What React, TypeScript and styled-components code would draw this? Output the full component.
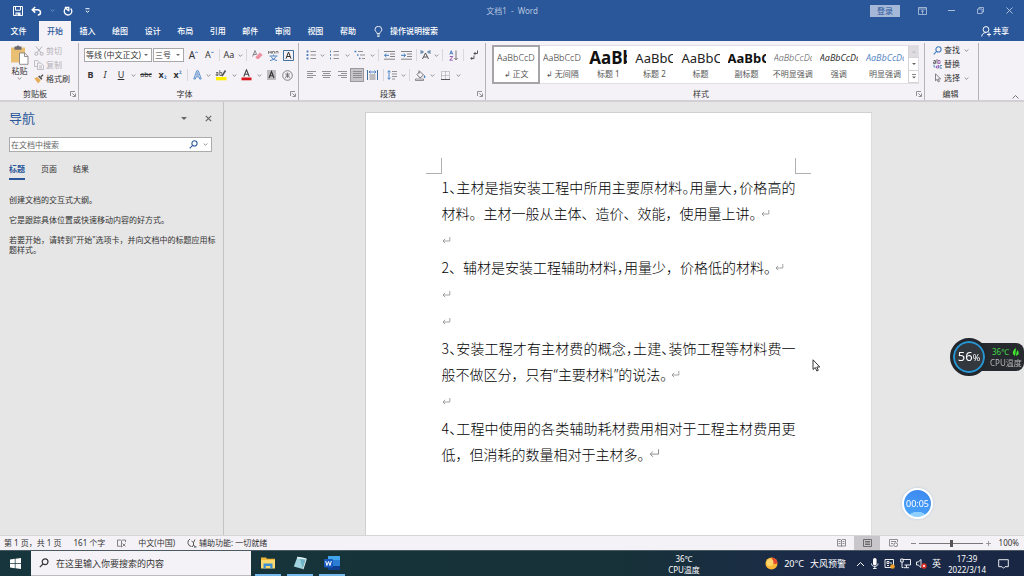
import React from 'react';
import styled, { createGlobalStyle, css } from 'styled-components';

const blue = '#2a579a';
const ui = '"Noto Sans", "Noto Sans CJK SC", sans-serif';

const GlobalStyle = createGlobalStyle`
  * { box-sizing: border-box; }
  body { margin: 0; background: #e6e6e6; font: 8px/12px ${ui}; color: #333; overflow: hidden; }
  button, input, select { font: inherit; color: inherit; }
  button { border: 0; padding: 0; background: none; }
  svg { display: block; flex: none; }
  p, h1, h2, ul { margin: 0; padding: 0; }
`;

const Shell = styled.div`
  display: flex;
  flex-direction: column;
  height: 100vh;
  min-height: 320px;
`;

/* Title bar */
const TitleBar = styled.header`
  display: grid;
  grid-template-columns: 1fr auto 1fr;
  align-items: center;
  height: 21px;
  background: ${blue};
  color: #fff;
`;
const QuickAccess = styled.div`
  display: flex;
  align-items: center;
  gap: 8px;
  padding-left: 13px;
`;
const WindowTitle = styled.h1`
  font-size: 8px;
  font-weight: 400;
  line-height: 12px;
  color: #b4c4de;
  white-space: pre;
`;
const WindowButtons = styled.div`
  display: flex;
  justify-content: flex-end;
  align-items: center;
  color: #b9c8e0;
`;
const SignIn = styled.button`
  width: 30px;
  height: 12px;
  margin-right: 8px;
  background: #a5b8d7;
  color: ${blue};
`;
const WindowButton = styled.button`
  display: flex;
  justify-content: center;
  width: 29px;
`;
const IconButton = styled.button`
  display: flex;
  align-items: center;
  justify-content: center;
`;

/* Ribbon tabs */
const TabBar = styled.nav`
  display: flex;
  align-items: stretch;
  height: 20px;
  background: ${blue};
  color: #fff;
  font-weight: 500;
`;
const FileTab = styled.button`
  width: 39px;
  padding-right: 2px;
`;
const TabList = styled.div`
  display: flex;
  justify-content: space-between;
  width: 325px;
`;
const Tab = styled.button<{ $active?: boolean }>`
  width: 32px;
  ${p => p.$active && css`background: #f5f2f7; color: ${blue};`}
`;
const TellMe = styled.button`
  display: flex;
  align-items: center;
  gap: 7px;
  margin-left: 10px;
`;
const Share = styled(TellMe)`
  gap: 2px;
  margin: 0 15px 0 auto;
`;

/* Ribbon */
const Ribbon = styled.section`
  display: flex;
  height: 61px;
  padding: 2px 0 0;
  background: #f5f2f7;
  border-bottom: 2px solid #d2d0d4;
`;
const Group = styled.div<{ $w?: number }>`
  display: flex;
  flex-direction: column;
  justify-content: space-between;
  ${p => (p.$w ? css`width: ${p.$w}px;` : css`flex: 1; min-width: 0;`)}
  border-right: 1px solid #b5b3b8;
`;
const GroupFooter = styled.div`
  display: flex;
  align-items: center;
  height: 12px;
  padding-right: 2px;
`;
const GroupName = styled.span`
  flex: 1;
  text-align: center;
`;
const Rows = styled.div`
  display: flex;
  flex-direction: column;
  gap: 6px;
  padding: 5px 0 0 5px;
`;
const Row = styled.div`
  display: flex;
  height: 14px;
`;
const Tool = styled.button<{ $w: number; $on?: boolean }>`
  display: flex;
  align-items: center;
  justify-content: center;
  width: ${p => p.$w}px;
  height: 14px;
  ${p => p.$on && css`background: #c6c4c8; outline: 1px solid #9b999d; outline-offset: -1px;`}
`;
const Divider = styled.i`
  width: 5px;
  height: 14px;
  background: linear-gradient(#d9d7db, #d9d7db) center / 1px 12px no-repeat;
`;
const Combo = styled.span<{ $w: number }>`
  display: flex;
  align-items: center;
  width: ${p => p.$w}px;
  height: 14px;
  margin-right: 1px;
  padding-right: 3px;
  background: #fff;
  border: 1px solid #a9a8ab;
`;
const ComboSelect = styled.select`
  flex: 1;
  min-width: 0;
  height: 12px;
  padding: 0 0 0 1px;
  border: 0;
  appearance: none;
  background: none;
  line-height: 12px;
`;
const Letter = styled.span<{ $bold?: boolean; $italic?: boolean; $line?: string; $size?: number }>`
  font-size: ${p => p.$size ?? 9}px;
  font-weight: ${p => (p.$bold ? 700 : 400)};
  font-style: ${p => (p.$italic ? 'italic' : 'normal')};
  text-decoration: ${p => p.$line ?? 'none'};
  line-height: 12px;
`;

const Clipboard = styled.div`
  display: flex;
  gap: 5px;
  padding: 2px 0 0 10px;
`;
const PasteButton = styled.button`
  display: flex;
  flex-direction: column;
  align-items: center;
  width: 19px;
  height: 38px;
`;
const Stack = styled.div`
  display: flex;
  flex-direction: column;
  gap: 2px;
`;
const SmallCommand = styled.button<{ $off?: boolean }>`
  display: flex;
  align-items: center;
  gap: 2px;
  height: 12px;
  color: ${p => (p.$off ? '#b3b1b5' : '#333')};
`;
const Editing = styled(Stack)`
  padding: 1px 0 0 8px;
`;

const Gallery = styled.div`
  display: flex;
  height: 39px;
  margin: 2px 5px 0 6px;
  background: #fff;
  border: 1px solid #e1dfe3;
`;
const StyleList = styled.div`
  display: grid;
  grid-template-columns: repeat(9, 1fr);
  flex: 1;
`;
const StyleTile = styled.button<{ $on?: boolean }>`
  display: flex;
  flex-direction: column;
  align-items: center;
  min-width: 0;
  padding: 0 4px;
  ${p => p.$on && css`outline: 2px solid #a6a4a8; outline-offset: -1px;`}
`;
const Sample = styled.span<{ $size: number; $weight: number; $italic?: boolean; $color: string }>`
  width: 100%;
  height: 22px;
  overflow: hidden;
  text-align: left;
  line-height: 24px;
  font-size: ${p => p.$size}px;
  font-weight: ${p => p.$weight};
  font-style: ${p => (p.$italic ? 'italic' : 'normal')};
  color: ${p => p.$color};
`;
const StyleName = styled.span`
  color: #555;
  white-space: nowrap;
`;
const GalleryScroll = styled.div`
  display: grid;
  grid-template-rows: repeat(3, 1fr);
  width: 10px;
  border-left: 1px solid #d5d3d7;
`;
const ScrollButton = styled(IconButton)<{ $off?: boolean }>`
  border-bottom: 1px solid #d5d3d7;
  background: ${p => (p.$off ? '#dddbdf' : '#fff')};
`;
const RibbonTail = styled.div`
  display: flex;
  align-items: flex-end;
  justify-content: flex-end;
  width: 45px;
  padding: 0 5px 1px 0;
`;

/* Work area */
const Workspace = styled.main`
  display: flex;
  flex: 1;
  min-height: 0;
`;
const NavPane = styled.aside`
  width: 224px;
  padding: 7px 11px 0 9px;
  border-right: 1px solid #c4c4c4;
`;
const PaneHeader = styled.div`
  display: flex;
  align-items: center;
  gap: 18px;
  height: 18px;
  color: #666;
`;
const PaneTitle = styled.h2`
  flex: 1;
  font-size: 13px;
  line-height: 18px;
  font-weight: 400;
  color: ${blue};
`;
const SearchBox = styled.div`
  display: flex;
  align-items: center;
  gap: 5px;
  height: 15px;
  margin-top: 10px;
  padding-right: 3px;
  background: #fff;
  border: 1px solid #ababab;
`;
const SearchField = styled.input`
  flex: 1;
  min-width: 0;
  height: 12px;
  padding: 0 1px;
  border: 0;
  background: none;
  outline: 0;
  &::placeholder { color: #666; opacity: 1; }
`;
const PaneTabs = styled.div`
  display: flex;
  gap: 16px;
  margin-top: 10px;
`;
const PaneTab = styled.button<{ $active?: boolean }>`
  height: 18px;
  padding-bottom: 4px;
  ${p => p.$active && css`color: ${blue}; font-weight: 700; border-bottom: 2px solid ${blue}; padding-bottom: 2px;`}
`;
const Hints = styled.div`
  display: flex;
  flex-direction: column;
  gap: 10px;
  margin: 15px -8px 0 0;
  line-height: 10px;
`;

const Canvas = styled.div`
  display: flex;
  justify-content: center;
  flex: 1;
  min-width: 0;
  padding: 10px 12px 0 0;
  overflow: hidden;
`;
const Paper = styled.article`
  position: relative;
  width: 507px;
  padding: 61px 75px 0 76px;
  background: #fff;
  border: 1px solid #d0d0d0;
  border-bottom: 0;
  border-right-color: #dcdcdc;
  color: #000;
  font: 300 14px/26px "Noto Sans CJK SC", sans-serif;
`;
const Corner = styled.i<{ $side: 'left' | 'right' }>`
  position: absolute;
  top: 45px;
  width: 16px;
  height: 16px;
  border-bottom: 1px solid #b0b0b0;
  ${p => (p.$side === 'left'
    ? css`left: 60px; border-right: 1px solid #b0b0b0;`
    : css`right: 60px; border-left: 1px solid #b0b0b0;`)}
`;
const Paragraph = styled.p`
  margin-bottom: 1px;
  text-align: justify;
`;
const Half = styled.span`
  font-feature-settings: "halt";
`;
const Quote = styled.span`
  font-family: "Noto Sans", sans-serif;
  line-height: 20px;
`;
const Mark = styled.svg`
  display: inline-block;
  margin-left: 4px;
  vertical-align: 1px;
`;
const EmptyMark = styled(Mark)`
  margin-left: 0;
`;

/* Overlays */
const CpuMeter = styled.div`
  position: fixed;
  right: 0;
  top: 338px;
  display: flex;
  align-items: center;
`;
const CpuDial = styled.div`
  display: flex;
  align-items: baseline;
  justify-content: center;
  width: 38px;
  height: 38px;
  margin-right: -8px;
  border-radius: 50%;
  border: 3px solid #23272c;
  background: #33373e;
  box-shadow: inset 0 0 0 2px #2597d6;
  color: #fff;
  font-size: 13px;
  line-height: 30px;
  z-index: 1;
`;
const Percent = styled.span`
  font-size: 9px;
`;
const CpuInfo = styled.div`
  width: 44px;
  height: 28px;
  padding: 3px 0 0 10px;
  border-radius: 0 8px 8px 0;
  background: #26292d;
  color: #b5b7ba;
  line-height: 11px;
  white-space: nowrap;
`;
const CpuTemp = styled.div`
  display: flex;
  align-items: center;
  gap: 3px;
  padding-left: 2px;
  color: #41d84a;
`;
const Timer = styled.div`
  position: fixed;
  right: 91px;
  bottom: 57px;
  width: 31px;
  height: 31px;
  border-radius: 50%;
  border: 2px solid #fff;
  background: radial-gradient(circle at 50% 130%, #8fd0ff 0 35%, transparent 36%), linear-gradient(200deg, #3b86ee, #4aa6fb);
  box-shadow: 0 0 3px #b9cbe0;
  color: #fff;
  font-size: 9px;
  line-height: 27px;
  text-align: center;
`;
const Pointer = styled.svg`
  position: fixed;
  left: 812px;
  top: 359px;
`;

/* Status bar */
const StatusBar = styled.footer`
  display: flex;
  align-items: center;
  height: 15px;
  padding: 0 5px 0 4px;
  background: #f5f2f7;
  border-top: 1px solid #d6d4d8;
`;
const StatusLeft = styled.div`
  display: flex;
  align-items: center;
  gap: 12px;
  flex: 1;
`;
const StatusItem = styled.span`
  display: flex;
  align-items: center;
  gap: 2px;
  white-space: nowrap;
`;
const ViewButton = styled.button<{ $on?: boolean }>`
  display: flex;
  align-items: center;
  justify-content: center;
  width: 26px;
  height: 14px;
  background: ${p => (p.$on ? '#c8c6ca' : 'none')};
`;
const Zoom = styled.div`
  display: flex;
  align-items: center;
  gap: 3px;
  margin-left: 5px;
`;
const ZoomSlider = styled.input`
  width: 64px;
  height: 10px;
  margin: 0;
  appearance: none;
  background: linear-gradient(#777, #777) center / 100% 1px no-repeat;
  &::-webkit-slider-thumb {
    appearance: none;
    width: 3px;
    height: 7px;
    background: #555;
  }
`;
const ZoomValue = styled.output`
  width: 25px;
  text-align: right;
`;

/* Taskbar */
const Taskbar = styled.footer`
  display: flex;
  align-items: center;
  height: 26px;
  border-top: 1px solid #4a5a62;
  background: linear-gradient(90deg, #16353d, #173238 60%, #1b2a49 80%, #192744);
  color: #fff;
`;
const StartButton = styled(IconButton)`
  width: 31px;
  height: 25px;
`;
const TaskSearch = styled.div`
  display: flex;
  align-items: center;
  gap: 6px;
  width: 220px;
  height: 25px;
  padding-left: 8px;
  background: #f5f2f7;
  border-bottom: 1px solid #bbb;
  color: #333;
  font-size: 9px;
`;
const TaskField = styled(SearchField)`
  height: 16px;
  &::placeholder { color: #333; }
`;
const TaskApps = styled.div`
  display: flex;
  flex: 1;
  gap: 6px;
  padding-left: 4px;
`;
const TaskApp = styled(IconButton)`
  width: 26px;
  height: 25px;
  border-bottom: 2px solid #76b9ed;
`;
const TwoLine = styled.div`
  display: flex;
  flex-direction: column;
  align-items: center;
  width: 42px;
  line-height: 11px;
`;
const Tray = styled.div`
  display: flex;
  align-items: center;
  justify-content: flex-end;
  gap: 5px;
  width: 319px;
  padding-right: 15px;
  font-size: 9px;
`;
const Weather = styled.span`
  display: flex;
  align-items: center;
  gap: 6px;
  margin-right: 5px;
  white-space: nowrap;
`;
const Clock = styled(TwoLine)`
  margin-right: 5px;
  font-size: 8px;
`;

type GlyphProps = { w: number; h: number; children: React.ReactNode; stroke?: string };
const Glyph = ({ w, h, children, stroke = 'currentColor' }: GlyphProps) => (
  <svg width={w} height={h} viewBox={`0 0 ${w} ${h}`} fill="none" stroke={stroke} aria-hidden="true">{children}</svg>
);

const Chevron = ({ color = '#777' }: { color?: string }) => (
  <Glyph w={5} h={3} stroke={color}><path d="M.7.5 2.5 2.3 4.3.5" strokeWidth=".8" /></Glyph>
);
const Triangle = ({ s = 4 }: { s?: number }) => (
  <svg width={s} height={s / 2} viewBox="0 0 4 2" aria-hidden="true"><path d="M0 0h4L2 2z" fill="#666" /></svg>
);
const Launcher = () => (
  <IconButton aria-label="更多选项">
    <Glyph w={6} h={6} stroke="#777"><path d="M.5 5V.5H5M2.3 2.3 5 5M5.5 2.5v3h-3" strokeWidth=".8" /></Glyph>
  </IconButton>
);
const Magnifier = ({ s = 10, color = '#41719c' }: { s?: number; color?: string }) => (
  <svg width={s} height={s} viewBox="0 0 10 10" fill="none" stroke={color} strokeWidth="1.2" aria-hidden="true">
    <circle cx="6.1" cy="3.8" r="2.9" /><path d="M4 6 .8 9.2" />
  </svg>
);
const Lines = ({ rows }: { rows: [number, number][] }) => (
  <Glyph w={11} h={10} stroke="#8a888c">
    {rows.map(([a, b], i) => <path key={i} d={`M${a} ${i * 2 + 1.5}H${b}`} strokeWidth=".9" />)}
  </Glyph>
);
const Drop = ({ label }: { label: string }) => <Tool $w={8} aria-label={label}><Chevron /></Tool>;
const Return = ({ big, empty }: { big?: boolean; empty?: boolean }) => {
  const El = empty ? EmptyMark : Mark;
  return (
    <El width={big ? 11 : 9} height={big ? 11 : 9} viewBox="0 0 9 9" fill="none" stroke="#8c8c8c" strokeWidth=".8" aria-hidden="true">
      <path d="M7.8 1v4H1M3.2 2.8 1 5l2.2 2.2" />
    </El>
  );
};

const ListIcon = ({ kind }: { kind: 'dot' | 'num' | 'multi' }) => (
  <Glyph w={11} h={10} stroke="#777">
    {kind === 'multi' ? (
      <><path d="M4 1.5h5M6 5h5M8 8.5h3" strokeWidth=".8" /><path d="M.5 1.5h1.8M3 5h1.5M5 8.5h1.5" stroke="#4a7ebb" strokeWidth="1.6" /></>
    ) : (
      <>
        <path d="M4.5 1.5H10M4.5 5H10M4.5 8.5H10" strokeWidth=".8" />
        <path d="M1.5.6v1.8M1.5 4.1v1.8M1.5 7.6v1.8" stroke="#4a7ebb" strokeWidth={kind === 'dot' ? 1.8 : 1} />
      </>
    )}
  </Glyph>
);
const IndentIcon = ({ inward }: { inward?: boolean }) => (
  <Glyph w={11} h={9} stroke="#777">
    <path d="M0 .5h11M6 3h5M6 5.5h5M0 8.2h11" strokeWidth=".9" />
    <path d={inward ? 'M0 4.3h4.4M2.8 2.6l1.8 1.7L2.8 6' : 'M5 4.3H.7M2.3 2.6.5 4.3 2.3 6'} stroke="#3b78bd" />
  </Glyph>
);

const tabs = ['开始', '插入', '绘图', '设计', '布局', '引用', '邮件', '审阅', '视图', '帮助'];

const styles = [
  { name: '↲ 正文', size: 9, weight: 300, color: '#333' },
  { name: '↲ 无间隔', size: 9, weight: 300, color: '#333' },
  { name: '标题 1', size: 17, weight: 700, color: '#111' },
  { name: '标题 2', size: 13, weight: 400, color: '#222' },
  { name: '标题', size: 13, weight: 400, color: '#222' },
  { name: '副标题', size: 13, weight: 700, color: '#111' },
  { name: '不明显强调', size: 9, weight: 300, color: '#555', italic: true },
  { name: '强调', size: 9, weight: 400, color: '#333', italic: true },
  { name: '明显强调', size: 9, weight: 400, color: '#5b8ac6', italic: true },
];

const TopBars = () => (
  <>
    <TitleBar>
      <QuickAccess>
        <IconButton aria-label="保存">
          <Glyph w={10} h={10}><path d="M.5.5h9v9h-9zM2.500.8v3.400h5V.8" /><path d="M2.500 6.500h5v3h-5z" fill="#fff" stroke="none" /><path d="M4 7.500v2" stroke={blue} /></Glyph>
        </IconButton>
        <IconButton aria-label="撤消">
          <Glyph w={11} h={10}><path d="M4.2 1 1.3 3.8l2.9 2.8M1.5 3.8h4.7c4.6.3 4 5.2.6 5.3" strokeWidth="1.5" /></Glyph>
        </IconButton>
        <Chevron color="#7f9cc9" />
        <IconButton aria-label="重复">
          <Glyph w={10} h={10}><path d="M7.600 2.400A3.800 3.800 0 1 1 2.600 2.300L5.300 4.500M1.800 1.500h4v3.700" strokeWidth="1.300" /></Glyph>
        </IconButton>
        <IconButton aria-label="自定义快速访问工具栏">
          <Glyph w={12} h={5}><path d="M4.500.7h4M4.800 2.800l1.700 1.400 1.700-1.400" /></Glyph>
        </IconButton>
      </QuickAccess>
      <WindowTitle>文档1  -  Word</WindowTitle>
      <WindowButtons>
        <SignIn>登录</SignIn>
        <WindowButton aria-label="功能区显示选项">
          <Glyph w={9} h={8}><path d="M.5.5h8v7h-8zM.5 2h8M4.5 6.8V3.4M3 4.7l1.5-1.4L6 4.7" strokeWidth=".8" /></Glyph>
        </WindowButton>
        <WindowButton aria-label="最小化"><Glyph w={7} h={7}><path d="M0 3.5h7" strokeWidth=".9" /></Glyph></WindowButton>
        <WindowButton aria-label="向下还原">
          <Glyph w={7} h={7}><path d="M.5 2h4.6v4.5H.5zM2 2V.5h4.5V5H5" strokeWidth=".8" /></Glyph>
        </WindowButton>
        <WindowButton aria-label="关闭"><Glyph w={7} h={7}><path d="m.5.5 6 6m0-6-6 6" strokeWidth=".9" /></Glyph></WindowButton>
      </WindowButtons>
    </TitleBar>
    <TabBar>
      <FileTab>文件</FileTab>
      <TabList>{tabs.map((t, i) => <Tab key={t} $active={i === 0}>{t}</Tab>)}</TabList>
      <TellMe>
        <Glyph w={9} h={11}><path d="M3 7.5C3 6 1 5.500 1 3.700a3.400 3.400 0 0 1 6.800 0C7.800 5.500 5.800 6 5.800 7.500zM3 9h2.800M3.300 10.400h2.200" strokeWidth=".9" /></Glyph>
        操作说明搜索
      </TellMe>
      <Share>
        <Glyph w={10} h={11}><circle cx="5" cy="3.500" r="2.900" /><path d="M.7 10.500C1 7.800 2.800 6.600 4.800 6.600M8 6.500v4M6 8.500h4" /></Glyph>
        共享
      </Share>
    </TabBar>
  </>
);

const ClipboardGroup = () => (
  <Group $w={79}>
    <Clipboard>
      <PasteButton>
        <Glyph w={19} h={20} stroke="none">
          <path d="M1 2.500h14v15H1z" fill="#e9bf74" /><path d="M4.500 1.500h2a1.600 1.600 0 0 1 3 0h2v3.200h-7z" fill="#6b6870" />
          <path d="M9.500 8h5.200l3.300 3.300v8H9.500z" fill="#fff" stroke="#777" strokeWidth=".8" /><path d="M14.500 8v3.500H18" stroke="#777" strokeWidth=".8" />
        </Glyph>
        粘贴
        <Chevron />
      </PasteButton>
      <Stack>
        <SmallCommand $off>
          <Glyph w={10} h={10}><path d="m2 .5 4.800 6M8 .5l-4.800 6" /><circle cx="2.300" cy="7.800" r="1.500" /><circle cx="7.600" cy="7.800" r="1.500" /></Glyph>剪切
        </SmallCommand>
        <SmallCommand $off>
          <Glyph w={10} h={10}><path d="M3.500 6.500h-3v-6h3l2 2M3.500 3h3.300L9.500 5.500v4h-6zM5 6h3M5 7.800h3" strokeWidth=".8" /></Glyph>复制
        </SmallCommand>
        <SmallCommand>
          <Glyph w={10} h={10} stroke="none"><path d="m.3 4.200 3-1.200 3.400 3.300-2.500 3.300z" fill="#e5ad57" /><path d="m4 2.600 1.500-1 2.900 2.900-1 1.500z" fill="#555" /><path d="m7 2.800 2-2" stroke="#555" strokeWidth="1.600" /></Glyph>格式刷
        </SmallCommand>
      </Stack>
    </Clipboard>
    <GroupFooter><GroupName>剪贴板</GroupName><Launcher /></GroupFooter>
  </Group>
);

const FontGroup = () => (
  <Group $w={220}>
    <Rows>
      <Row>
        <Combo $w={68}><ComboSelect aria-label="字体"><option>等线 (中文正文)</option></ComboSelect><Triangle /></Combo>
        <Combo $w={31}><ComboSelect aria-label="字号"><option>三号</option></ComboSelect><Triangle /></Combo>
        <Tool $w={17} aria-label="增大字号"><Letter $size={10}>A</Letter><Glyph w={3} h={8} stroke="#3b78bd"><path d="m.3 2 1.200-1.200L2.700 2" /></Glyph></Tool>
        <Tool $w={15} aria-label="减小字号"><Letter $size={9}>A</Letter><Glyph w={3} h={8} stroke="#3b78bd"><path d="m.3.800 1.200 1.200L2.700.800" /></Glyph></Tool>
        <Divider />
        <Tool $w={14} aria-label="更改大小写"><Letter>Aa</Letter></Tool><Drop label="大小写选项" />
        <Divider />
        <Tool $w={16} aria-label="清除所有格式">
          <Glyph w={11} h={11} stroke="none"><path d="m4 6.500 4-4 2.600 2.600-4 4H5L3.500 7.500z" fill="#ee8fa2" /><path d="M.6 6.500 3 .6l1.700 4M1.400 4.500h2.800" stroke="#666" strokeWidth=".8" /></Glyph>
        </Tool>
        <Tool $w={16} aria-label="拼音指南">
          <Glyph w={11} h={11}><path d="M.5 1v2.500L2 1.500l1.300 2V1M4.500 3.500v-2H6.500v2M8 3.500v-2h2v2" stroke="#666" strokeWidth=".8" /><path d="M5.500 4.500v1.300M1.500 6h8M3 6.500c1 2 3 3.500 6 4M8 6.500c-1 2-3 3.500-6 4" stroke="#3b78bd" strokeWidth=".9" /></Glyph>
        </Tool>
        <Tool $w={15} aria-label="字符边框">
          <Glyph w={11} h={11}><path d="M.5.5h10v10H.5z" stroke="#41719c" /><path d="M3 8.700 5.500 2 8 8.700M3.900 6.500h3.200" stroke="#333" /></Glyph>
        </Tool>
      </Row>
      <Row>
        <Tool $w={13} aria-label="加粗"><Letter $bold>B</Letter></Tool>
        <Tool $w={16} aria-label="倾斜"><Letter $italic>I</Letter></Tool>
        <Tool $w={16} aria-label="下划线"><Letter $line="underline">U</Letter></Tool><Drop label="下划线样式" />
        <Tool $w={18} aria-label="删除线"><Letter $line="line-through" $size={7}>abc</Letter></Tool>
        <Tool $w={15} aria-label="下标"><Letter $bold>x</Letter><Glyph w={3} h={8} stroke="#3b78bd"><path d="M.3 5h1.700v1.200L.5 7.500H2.700" strokeWidth=".7" /></Glyph></Tool>
        <Tool $w={15} aria-label="上标"><Letter $bold>x</Letter><Glyph w={3} h={10} stroke="#3b78bd"><path d="M.3 1h1.700v1.200L.5 3.500H2.700" strokeWidth=".7" /></Glyph></Tool>
        <Divider />
        <Tool $w={14} aria-label="文本效果">
          <Glyph w={9} h={10} stroke="#4a86c8"><path d="M.8 9 3.700.800h1.600L8.200 9H6.700L6 6.800H3L2.300 9z" strokeWidth=".9" /><path d="m3.500 5.300 1-2.800 1 2.800z" strokeWidth=".7" /></Glyph>
        </Tool>
        <Drop label="文本效果选项" />
        <Tool $w={18} aria-label="突出显示">
          <Glyph w={12} h={12} stroke="#555"><path d="M1 8h10.500v3.300H1z" fill="#fff000" stroke="none" /><path d="M1 3.500h2v3H1.200V5H3M4.800 1v5.500h2v-3h-2" strokeWidth=".8" /><path d="m7 7 3.500-5.500" strokeWidth="1.600" /></Glyph>
        </Tool>
        <Drop label="突出显示颜色" />
        <Tool $w={17} aria-label="字体颜色">
          <Glyph w={11} h={12} stroke="#444"><path d="M2.800 7.500 5.500.800l2.700 6.700M3.700 5.300h3.600" strokeWidth="1.100" /><path d="M.5 8.500h10v2.800H.5z" fill="#d8141c" stroke="none" /></Glyph>
        </Tool>
        <Drop label="字体颜色选项" />
        <Tool $w={17} aria-label="字符底纹">
          <Glyph w={9} h={10} stroke="#333"><path d="M0 0h9v10H0z" fill="#bdbbbf" stroke="none" /><path d="m2 8 2.500-6.500L7 8M2.900 5.800h3.200" strokeWidth="1.100" /></Glyph>
        </Tool>
        <Tool $w={15} aria-label="带圈字符">
          <Glyph w={11} h={11} stroke="#666"><circle cx="5.500" cy="5.500" r="4.800" strokeWidth=".8" /><path d="M3 4h5M5.500 2.500V8M3 8c1.500-.5 2-2 2.300-4M8 8C6.500 7.500 6 6 5.700 4M3.500 6h4" strokeWidth=".7" /></Glyph>
        </Tool>
      </Row>
    </Rows>
    <GroupFooter><GroupName>字体</GroupName><Launcher /></GroupFooter>
  </Group>
);

const ParagraphGroup = () => (
  <Group $w={187}>
    <Rows>
      <Row>
        <Tool $w={14} aria-label="项目符号"><ListIcon kind="dot" /></Tool><Drop label="项目符号库" />
        <Tool $w={17} aria-label="编号"><ListIcon kind="num" /></Tool><Drop label="编号库" />
        <Tool $w={17} aria-label="多级列表"><ListIcon kind="multi" /></Tool><Drop label="列表库" />
        <Divider />
        <Tool $w={17} aria-label="减少缩进量"><IndentIcon /></Tool>
        <Tool $w={16} aria-label="增加缩进量"><IndentIcon inward /></Tool>
        <Divider />
        <Tool $w={13} aria-label="中文版式">
          <Glyph w={11} h={10} stroke="#555"><path d="M2.500 9 5.500 3l3 6M3.700 7h3.600" /><path d="M1 0v4M1 2h3M3 .8 1.500 2 3 3.200M10 0v4M10 2H7M8 .8 9.500 2 8 3.200" stroke="#41719c" strokeWidth=".8" /></Glyph>
        </Tool>
        <Drop label="中文版式选项" />
        <Divider />
        <Tool $w={16} aria-label="排序">
          <Glyph w={9} h={11} stroke="#555"><path d="M.8 4.500 2.300.7l1.500 3.800M1.200 3.300h2.200" stroke="#3b78bd" strokeWidth=".9" /><path d="M.8 6.500h3l-3 3.700h3" stroke="#8a4fa3" strokeWidth=".9" /><path d="M7 .5v9M5.300 8 7 9.800 8.700 8" strokeWidth=".8" /></Glyph>
        </Tool>
        <Divider />
        <Tool $w={16} aria-label="显示编辑标记">
          <Glyph w={9} h={10} stroke="#444"><path d="M7.500.5v3H4M5.500 2 4 3.500 5.500 5M4 5.500v3H.8M2.300 7 .8 8.500l1.500 1.300" strokeWidth=".9" /></Glyph>
        </Tool>
      </Row>
      <Row>
        <Tool $w={15} aria-label="左对齐"><Lines rows={[[1, 10], [1, 7], [1, 10], [1, 7]]} /></Tool>
        <Tool $w={15} aria-label="居中"><Lines rows={[[1, 10], [2, 9], [1, 10], [2, 9]]} /></Tool>
        <Tool $w={16} aria-label="右对齐"><Lines rows={[[1, 10], [4, 10], [1, 10], [4, 10]]} /></Tool>
        <Tool $w={14} $on aria-label="两端对齐"><Lines rows={[[1, 10], [1, 10], [1, 10], [1, 10]]} /></Tool>
        <Tool $w={17} aria-label="分散对齐">
          <Glyph w={11} h={10} stroke="#777"><path d="M.5 0v10M10.500 0v10" stroke="#41719c" /><path d="M2.500 5h6M2.500 7h6M2.500 9h6" strokeWidth=".9" /><path d="M2 2h7M3.500.7 2 2l1.500 1.300M7.500.7 9 2 7.500 3.300" stroke="#3b78bd" strokeWidth=".9" /></Glyph>
        </Tool>
        <Divider />
        <Tool $w={13} aria-label="行距">
          <Glyph w={11} h={10} stroke="#777"><path d="M5 1.500h5M5 4h5M5 6.500h5M5 9h3" strokeWidth=".8" /><path d="M2 .8v8.400M.5 2.300 2 .7l1.500 1.600M.5 7.700 2 9.300l1.500-1.600" stroke="#3b78bd" strokeWidth=".9" /></Glyph>
        </Tool>
        <Drop label="行距选项" />
        <Divider />
        <Tool $w={16} aria-label="底纹">
          <Glyph w={11} h={11} stroke="#666"><path d="m2 4.500 3-3 3.500 3.500-3.500 3zM4 .5v3" strokeWidth=".9" /><path d="M9.500 5c1.500 2 .8 3 0 3s-1.200-1 0-3z" fill="#3b78bd" stroke="none" /><path d="M.5 9h8v1.500h-8z" strokeWidth=".7" /></Glyph>
        </Tool>
        <Drop label="底纹颜色" />
        <Tool $w={18} aria-label="边框">
          <Glyph w={9} h={9} stroke="#888"><path d="M.5.5h8v8h-8zM4.500.5v8M.5 4.500h8" strokeWidth=".8" strokeDasharray="1 1" /><path d="M0 8.500h9" stroke="#555" /></Glyph>
        </Tool>
        <Drop label="边框选项" />
      </Row>
    </Rows>
    <GroupFooter><GroupName>段落</GroupName><Launcher /></GroupFooter>
  </Group>
);

const StylesGroup = () => (
  <Group>
    <Gallery>
      <StyleList>
        {styles.map((s, i) => (
          <StyleTile key={s.name} $on={i === 0}>
            <Sample $size={s.size} $weight={s.weight} $italic={s.italic} $color={s.color}>AaBbCcDd</Sample>
            <StyleName>{s.name}</StyleName>
          </StyleTile>
        ))}
      </StyleList>
      <GalleryScroll>
        <ScrollButton $off aria-label="上一行"><Glyph w={4} h={2} stroke="#aaa"><path d="m.3 2 1.700-1.500L3.700 2" strokeWidth=".8" /></Glyph></ScrollButton>
        <ScrollButton aria-label="下一行"><Triangle /></ScrollButton>
        <ScrollButton aria-label="其他"><Glyph w={4} h={5} stroke="#666"><path d="M0 .5h4" strokeWidth=".8" /><path d="M0 2.500h4l-2 2z" fill="#666" stroke="none" /></Glyph></ScrollButton>
      </GalleryScroll>
    </Gallery>
    <GroupFooter><GroupName>样式</GroupName><Launcher /></GroupFooter>
  </Group>
);

const EditingGroup = () => (
  <Group $w={54}>
    <Editing>
      <SmallCommand><Magnifier s={9} color="#3b78bd" />查找<Drop label="查找选项" /></SmallCommand>
      <SmallCommand>
        <Glyph w={9} h={10} stroke="#555"><path d="M.5 1.500h2v3h-2v-1.500h2M4 0v4.500" strokeWidth=".8" /><path d="M5 1.500v3h2v-3zM5.500 7h-2v2h2V6" stroke="#8a4fa3" strokeWidth=".8" /><path d="M9 6.500H7v2.700h2M1 5.500V8h1.500" stroke="#3b78bd" strokeWidth=".8" /></Glyph>替换
      </SmallCommand>
      <SmallCommand>
        <Glyph w={9} h={10} stroke="#666"><path d="M2.500.8v7l1.700-1.500 1 2.600 1.200-.5-1-2.500h2.200z" strokeWidth=".8" /></Glyph>选择<Drop label="选择选项" />
      </SmallCommand>
    </Editing>
    <GroupFooter><GroupName>编辑</GroupName></GroupFooter>
  </Group>
);

const Navigation = () => (
  <NavPane>
    <PaneHeader>
      <PaneTitle>导航</PaneTitle>
      <IconButton aria-label="任务窗格选项"><Triangle s={6} /></IconButton>
      <IconButton aria-label="关闭窗格"><Glyph w={7} h={7}><path d="m.8.800 5.400 5.400m0-5.400L.8 6.200" strokeWidth="1.200" /></Glyph></IconButton>
    </PaneHeader>
    <SearchBox>
      <SearchField aria-label="在文档中搜索" placeholder="在文档中搜索" />
      <Magnifier s={9} color={blue} /><Chevron />
    </SearchBox>
    <PaneTabs><PaneTab $active>标题</PaneTab><PaneTab>页面</PaneTab><PaneTab>结果</PaneTab></PaneTabs>
    <Hints>
      <p>创建文档的交互式大纲。</p>
      <p>它是跟踪具体位置或快速移动内容的好方式。</p>
      <p>若要开始，请转到"开始"选项卡，并向文档中的标题应用标题样式。</p>
    </Hints>
  </NavPane>
);

const DocumentPage = () => (
  <Canvas>
    <Paper>
      <Corner $side="left" /><Corner $side="right" />
      <Paragraph>
        1<Half>、</Half>主材是指安装工程中所用主要原材料<Half>。</Half>用量大<Half>，</Half>价格高的材料。主材一般从主体、造价、效能，使用量上讲<Half>。</Half><Return />
      </Paragraph>
      <Paragraph><Return empty /></Paragraph>
      <Paragraph>2、辅材是安装工程辅助材料<Half>，</Half>用量少，价格低的材料<Half>。</Half><Return /></Paragraph>
      <Paragraph><Return empty /></Paragraph>
      <Paragraph><Return empty /></Paragraph>
      <Paragraph>
        3<Half>、</Half>安装工程才有主材费的概念<Half>，</Half>土建<Half>、</Half>装饰工程等材料费一般不做区分，只有<Quote>“</Quote>主要材料<Quote>”</Quote>的说法<Half>。</Half><Return />
      </Paragraph>
      <Paragraph><Return empty /></Paragraph>
      <Paragraph>
        4<Half>、</Half>工程中使用的各类辅助耗材费用相对于工程主材费用更低，但消耗的数量相对于主材多<Half>。</Half><Return big />
      </Paragraph>
    </Paper>
  </Canvas>
);

const Status = () => (
  <StatusBar>
    <StatusLeft>
      <StatusItem>第 1 页，共 1 页</StatusItem>
      <StatusItem>161 个字</StatusItem>
      <Glyph w={9} h={9} stroke="#666"><path d="M.5 1h3l1 .8V8l-1-.8h-3zM4.500 1.800l1-.8h3v2M5.500 4.500l3 3m0-3-3 3" strokeWidth=".8" /></Glyph>
      <StatusItem>中文(中国)</StatusItem>
      <StatusItem>
        <Glyph w={10} h={10} stroke="#444"><path d="M3 1a4 4 0 0 0 1.500 7.500M4.500 3l2 1.500 1.500-3M6.500 4.500V7L5 9M6.500 7l2 2M7 9h2.500" strokeWidth=".9" /></Glyph>
        辅助功能: 一切就绪
      </StatusItem>
    </StatusLeft>
    <ViewButton aria-label="阅读视图"><Glyph w={9} h={8} stroke="#666"><path d="M.5.5h3.200l.8.700.8-.7h3.200v6.500H.5zM4.500 1v6.500M1.500 2.500h2M1.500 4.500h2M5.500 2.500h2M5.500 4.500h2" strokeWidth=".7" /></Glyph></ViewButton>
    <ViewButton $on aria-label="页面视图"><Glyph w={9} h={8} stroke="#555"><path d="M.5.5h8v7h-8zM2 2.500h5M2 4h5M2 5.500h5" strokeWidth=".8" /></Glyph></ViewButton>
    <ViewButton aria-label="Web 版式视图"><Glyph w={9} h={8} stroke="#666"><path d="M4 7H.5V.5h8V3M2 2.500h5M2 4.500h2" strokeWidth=".7" /><circle cx="6.700" cy="5.700" r="1.900" strokeWidth=".8" /></Glyph></ViewButton>
    <Zoom>
      <IconButton aria-label="缩小"><Glyph w={5} h={5} stroke="#888"><path d="M0 2.500h5" /></Glyph></IconButton>
      <ZoomSlider type="range" min={0} max={100} defaultValue={50} aria-label="缩放" />
      <IconButton aria-label="放大"><Glyph w={5} h={5} stroke="#888"><path d="M0 2.500h5M2.500 0v5" strokeWidth=".8" /></Glyph></IconButton>
      <ZoomValue>100%</ZoomValue>
    </Zoom>
  </StatusBar>
);

const WindowsTaskbar = () => (
  <Taskbar>
    <StartButton aria-label="开始">
      <Glyph w={11} h={11} stroke="none"><path d="M0 1.500 4.800.8v4.400H0zM5.500.7 11 0v5.200H5.500zM0 5.900h4.800v4.400L0 9.600zM5.500 5.900H11V11l-5.500-.7z" fill="#fff" /></Glyph>
    </StartButton>
    <TaskSearch>
      <Magnifier color="#333" />
      <TaskField aria-label="搜索" placeholder="在这里输入你要搜索的内容" />
    </TaskSearch>
    <TaskApps>
      <TaskApp aria-label="文件资源管理器">
        <Glyph w={14} h={12} stroke="none"><path d="M0 .5h5l1 1.300h8V11H0z" fill="#f0b93a" /><path d="M0 3h14v8.500H0z" fill="#fbd96f" /><path d="M2.500 6.500h9v5H9.300V9H4.700v2.500H2.500z" fill="#3b8fd6" /></Glyph>
      </TaskApp>
      <TaskApp aria-label="记事本">
        <Glyph w={14} h={14} stroke="none"><path d="m4.500.8 8.300 1.400L9.500 13 .8 10.500z" fill="#9fd3de" /><path d="m12.800 2.200 1 .5L10.500 13.500l-1-.5z" fill="#dfe9ec" /><path d="m4.500.8 8.300 1.400-.5 1.500-8.300-1.500z" fill="#e9f3f5" /><path d="m7 2.800 5.200.9L9.500 12z" fill="#6fb4c6" /></Glyph>
      </TaskApp>
      <TaskApp aria-label="Word">
        <Glyph w={16} h={14} stroke="none"><rect x="4" y="0" width="12" height="14" rx="1" fill="#2b7cd3" /><path d="M4 0h11a1 1 0 0 1 1 1v3H4z" fill="#41a5ee" /><path d="M4 10h12v3a1 1 0 0 1-1 1H4z" fill="#103f91" /><rect y="3" width="9" height="8.500" rx="1" fill="#185abd" /><path d="m1.700 5 1.200 4.500L4.500 5.500l1.500 4L7.300 5" stroke="#fff" strokeWidth="1" /></Glyph>
      </TaskApp>
    </TaskApps>
    <TwoLine><span>36℃</span><span>CPU温度</span></TwoLine>
    <Tray>
      <Weather>
        <Glyph w={13} h={13} stroke="none"><circle cx="6.500" cy="6.500" r="6" fill="#f9b637" /><path d="M7 .5a6 6 0 0 1 5.500 6L8 7z" fill="#e5482e" /><circle cx="5" cy="5.500" r="3.500" fill="#fdd56b" /></Glyph>
        20°C <span>大风预警</span>
      </Weather>
      <IconButton aria-label="显示隐藏的图标"><Glyph w={9} h={6}><path d="m1 5 3.500-3.500L8 5" /></Glyph></IconButton>
      <Glyph w={9} h={11} stroke="none"><rect x="3" width="3.600" height="7.500" rx="1.800" fill="#fff" /><path d="M1.500 5.500C1.500 9.500 8 9.500 8 5.500M4.800 8.500V10.500M3 10.500h3.600" stroke="#fff" strokeWidth=".9" /></Glyph>
      <Glyph w={11} h={11}><path d="M1 1.500h8.500v8H1zM3 3.500h2v2H3zM6 5h2M3 7.500h2" strokeWidth=".9" /><circle cx="8.500" cy="8.500" r="2.300" fill="#f2a029" stroke="none" /></Glyph>
      <Glyph w={11} h={11}><path d="M2.500 1.500h8v5.500h-6M6.500 7v2.500M4 9.700h5M.7 1v3h2.500V1zM2 4v5.500h1.500" strokeWidth=".9" /></Glyph>
      <Glyph w={11} h={11}><path d="M.5 4v3h1.700L5 9.500v-8L2.200 4z" strokeWidth=".9" /><circle cx="8" cy="8" r="2.700" fill="#d93025" stroke="none" /><path d="m7 7 2 2m0-2L7 9" strokeWidth=".8" /></Glyph>
      <span>英</span>
      <Clock><span>17:39</span><span>2022/3/14</span></Clock>
      <IconButton aria-label="通知"><Glyph w={11} h={10}><path d="M.7.700h9.600v7H7l-1.500 1.600L4 7.700H.7z" strokeWidth=".9" /></Glyph></IconButton>
    </Tray>
  </Taskbar>
);

export default function App() {
  return (
    <>
      <GlobalStyle />
      <Shell lang="zh-CN">
        <TopBars />
        <Ribbon>
          <ClipboardGroup />
          <FontGroup />
          <ParagraphGroup />
          <StylesGroup />
          <EditingGroup />
          <RibbonTail>
            <IconButton aria-label="折叠功能区"><Glyph w={7} h={4} stroke="#666"><path d="m.5 3.500 3-3 3 3" strokeWidth=".9" /></Glyph></IconButton>
          </RibbonTail>
        </Ribbon>
        <Workspace>
          <Navigation />
          <DocumentPage />
        </Workspace>
        <Status />
        <WindowsTaskbar />
      </Shell>
      <CpuMeter>
        <CpuDial>56<Percent>%</Percent></CpuDial>
        <CpuInfo>
          <CpuTemp>36℃<Glyph w={7} h={8} stroke="none"><path d="M3 8C-.5 6 .5 2.500 4 0c-.3 3-.3 5-1 8zM4 8c.3-3 .5-4.500 1.500-6C7.500 5 7 7 4 8z" fill="#41e82e" /></Glyph></CpuTemp>
          <div>CPU温度</div>
        </CpuInfo>
      </CpuMeter>
      <Timer>00:05</Timer>
      <Pointer width="9" height="13" viewBox="0 0 9 13" aria-hidden="true">
        <path d="M1 .8v9.700l2.300-2 1.500 3.500 1.500-.7-1.500-3.300h3z" fill="#fff" stroke="#222" strokeWidth=".9" />
      </Pointer>
    </>
  );
}
